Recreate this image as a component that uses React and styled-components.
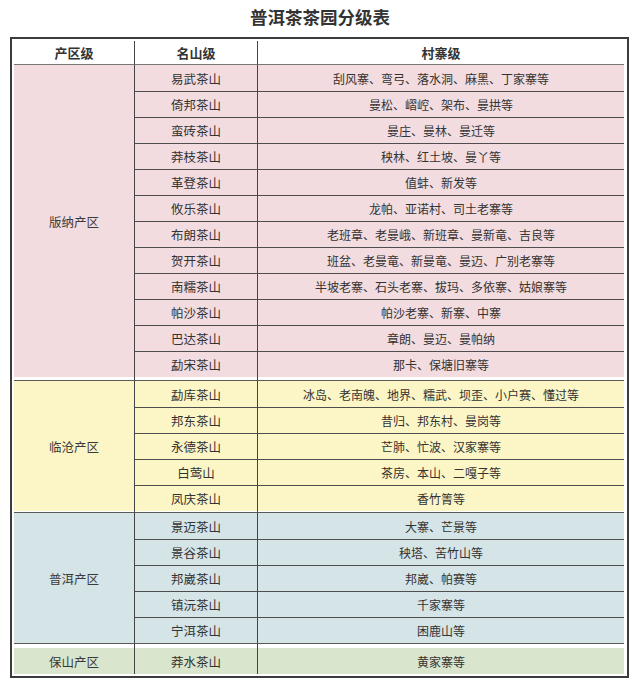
import React from "react";
import styled, { createGlobalStyle } from "styled-components";

const Global = createGlobalStyle`
  html, body { margin: 0; padding: 0; background: #ffffff; }
  body { font-family: "Noto Sans CJK SC", "Noto Sans", sans-serif; color: #333; }
`;

const Page = styled.div`
  width: 640px;
  height: 684px;
  background: #fff;
`;

const Title = styled.h1`
  margin: 0;
  height: 37px;
  padding-bottom: 4px;
  display: flex;
  align-items: center;
  justify-content: center;
  font-size: 17.5px;
  font-weight: 700;
  color: #333;
  box-sizing: border-box;
`;

const Frame = styled.div`
  margin: 0 11px 0 10px;
  border: 2px solid #3c3c3c;
  padding: 2px 3px 2px 2px;
  background: #fff;
`;

const Row = styled.div`
  display: grid;
  grid-template-columns: 121px 123px 1fr;
`;

const HeaderCell = styled.div`
  height: 23px;
  display: flex;
  align-items: center;
  justify-content: center;
  font-size: 13px;
  font-weight: 700;
  color: #333;
  border-bottom: 1px solid #777;
  border-right: ${(p) => (p.$last ? "none" : "1px solid #444")};
`;

const Section = styled.div`
  display: grid;
  grid-template-columns: 121px 123px 1fr;
  grid-auto-rows: 26px;
`;

const RegionCell = styled.div`
  grid-column: 1;
  grid-row: 1 / span ${(p) => p.$span};
  background: ${(p) => p.$bg};
  border-right: 1px solid #444;
  display: flex;
  align-items: center;
  justify-content: center;
  font-size: 12.5px;
  color: #3a3a3a;
`;

const NameCell = styled.div`
  grid-column: 2;
  background: ${(p) => p.$bg};
  border-right: 1px solid #444;
  border-top: ${(p) => (p.$first ? "none" : "1px solid #4e4e4e")};
  display: flex;
  align-items: center;
  justify-content: center;
  font-size: 12.5px;
  color: #333;
`;

const VillageCell = styled.div`
  grid-column: 3;
  background: ${(p) => p.$bg};
  border-top: ${(p) => (p.$first ? "none" : "1px solid #4e4e4e")};
  display: flex;
  align-items: center;
  justify-content: center;
  font-size: 12px;
  color: #333;
  white-space: nowrap;
`;

const SepCell = styled.div`
  height: ${(p) => p.$gap}px;
  background: #fff;
  border-top: ${(p) => (p.$lineTop ? "1px solid #5a5a5a" : "none")};
  border-bottom: ${(p) => (p.$lineBottom ? "1px solid #5a5a5a" : "none")};
  border-right: ${(p) => (p.$last ? "none" : "1px solid #444")};
`;

function Separator({ gap, lineTop, lineBottom }) {
  return (
    <Row>
      {[0, 1, 2].map((i) => (
        <SepCell
          key={i}
          $gap={gap}
          $lineTop={lineTop}
          $lineBottom={lineBottom}
          $last={i === 2}
        />
      ))}
    </Row>
  );
}

const sections = [
  {
    region: "版纳产区",
    bg: "#f2dce0",
    rows: [
      ["易武茶山", "刮风寨、弯弓、落水洞、麻黑、丁家寨等"],
      ["倚邦茶山", "曼松、嶍崆、架布、曼拱等"],
      ["蛮砖茶山", "曼庄、曼林、曼迁等"],
      ["莽枝茶山", "秧林、红土坡、曼丫等"],
      ["革登茶山", "值蚌、新发等"],
      ["攸乐茶山", "龙帕、亚诺村、司土老寨等"],
      ["布朗茶山", "老班章、老曼峨、新班章、曼新竜、吉良等"],
      ["贺开茶山", "班盆、老曼竜、新曼竜、曼迈、广别老寨等"],
      ["南糯茶山", "半坡老寨、石头老寨、拔玛、多依寨、姑娘寨等"],
      ["帕沙茶山", "帕沙老寨、新寨、中寨"],
      ["巴达茶山", "章朗、曼迈、曼帕纳"],
      ["勐宋茶山", "那卡、保塘旧寨等"],
    ],
  },
  {
    region: "临沧产区",
    bg: "#fcf6c6",
    rows: [
      ["勐库茶山", "冰岛、老南魄、地界、糯武、坝歪、小户赛、懂过等"],
      ["邦东茶山", "昔归、邦东村、曼岗等"],
      ["永德茶山", "芒肺、忙波、汉家寨等"],
      ["白莺山", "茶房、本山、二嘎子等"],
      ["凤庆茶山", "香竹箐等"],
    ],
  },
  {
    region: "普洱产区",
    bg: "#d5e4e7",
    rows: [
      ["景迈茶山", "大寨、芒景等"],
      ["景谷茶山", "秧塔、苦竹山等"],
      ["邦崴茶山", "邦崴、帕赛等"],
      ["镇沅茶山", "千家寨等"],
      ["宁洱茶山", "困鹿山等"],
    ],
  },
  {
    region: "保山产区",
    bg: "#d9e5cc",
    rows: [["莽水茶山", "黄家寨等"]],
  },
];

function TeaSection({ data }) {
  return (
    <Section>
      <RegionCell $span={data.rows.length} $bg={data.bg}>
        {data.region}
      </RegionCell>
      {data.rows.map(([name, villages], i) => (
        <React.Fragment key={name}>
          <NameCell $bg={data.bg} $first={i === 0}>
            {name}
          </NameCell>
          <VillageCell $bg={data.bg} $first={i === 0}>
            {villages}
          </VillageCell>
        </React.Fragment>
      ))}
    </Section>
  );
}

export default function App() {
  return (
    <Page>
      <Global />
      <Title>普洱茶茶园分级表</Title>
      <Frame>
        <Row>
          <HeaderCell>产区级</HeaderCell>
          <HeaderCell>名山级</HeaderCell>
          <HeaderCell $last>村寨级</HeaderCell>
        </Row>
        <TeaSection data={sections[0]} />
        <Separator gap={3} lineBottom />
        <TeaSection data={sections[1]} />
        <Separator gap={1} lineBottom />
        <TeaSection data={sections[2]} />
        <Separator gap={4} lineTop />
        <TeaSection data={sections[3]} />
      </Frame>
    </Page>
  );
}
